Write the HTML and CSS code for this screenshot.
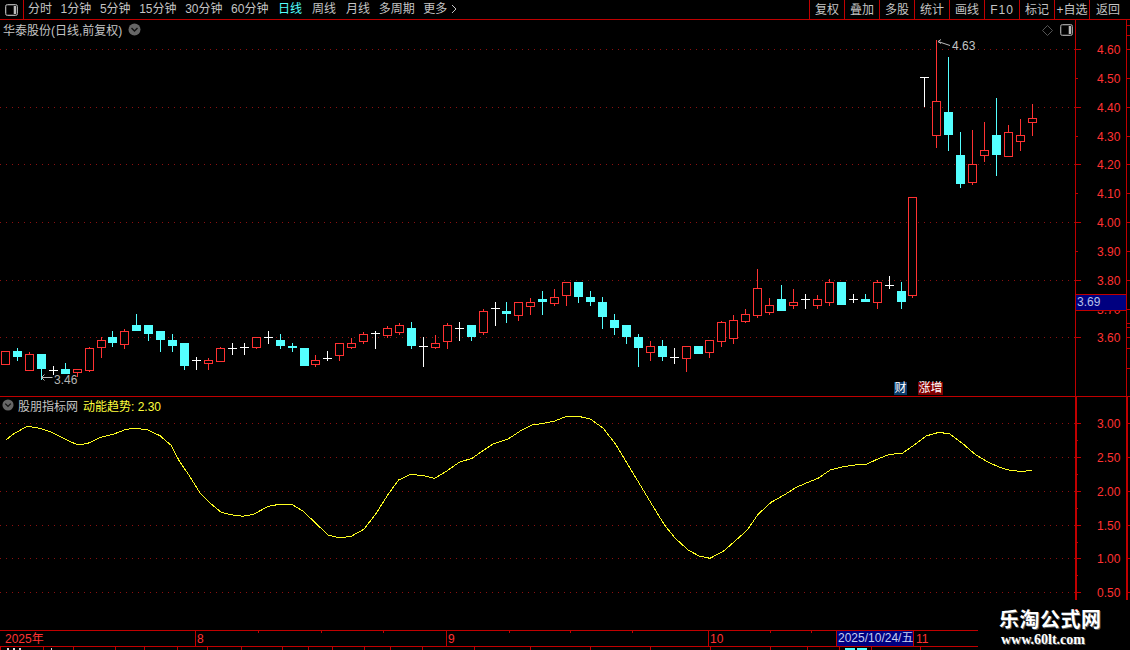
FILE: index.html
```html
<!DOCTYPE html>
<html lang="zh">
<head>
<meta charset="utf-8">
<title>华泰股份</title>
<link rel="stylesheet" href="styles.css">
</head>
<body>
<div class="app">
  <header class="toolbar">
    <div class="layout-btn">
      <svg width="14" height="12" viewBox="0 0 14 12"><rect x="0.5" y="0.5" width="12" height="11" rx="2" fill="#333" stroke="#aaa"/><rect x="2" y="2" width="6" height="8" fill="#000"/><rect x="9" y="2" width="2" height="8" fill="#bbb"/></svg>
    </div>
    <nav class="periods">
      <span>分时</span><span>1分钟</span><span>5分钟</span><span>15分钟</span><span>30分钟</span><span>60分钟</span>
      <span class="active">日线</span><span class="wk">周线</span><span class="wk">月线</span><span>多周期</span><span>更多 <svg class="chev" width="6" height="10" viewBox="0 0 6 10"><path d="M1 1l4 4-4 4" fill="none" stroke="#c4c4c4"/></svg></span>
    </nav>
    <div class="actions">
      <button>复权</button><button>叠加</button><button>多股</button><button>统计</button><button>画线</button><button class="f10">F10</button><button>标记</button><button class="plus">+自选</button><button class="last">返回</button>
    </div>
  </header>

  <section class="pane pane-main">
    <svg id="main" class="layer" width="1130" height="376" viewBox="0 20 1130 376"></svg>
    <div class="legend">
      <span class="stock">华泰股份(日线,前复权)</span>
      <svg class="circle" width="13" height="13" viewBox="0 0 13 13"><circle cx="6.5" cy="6.5" r="6" fill="#666"/><path d="M3.5 5l3 3 3-3" fill="none" stroke="#111" stroke-width="1.4"/></svg>
    </div>
    <div class="pane-icons">
      <svg width="11" height="11" viewBox="0 0 11 11"><path d="M5.5.5l5 5-5 5-5-5z" fill="none" stroke="#555"/></svg>
      <svg width="13" height="12" viewBox="0 0 13 12"><rect x="0.5" y="0.5" width="12" height="11" rx="2" fill="#333" stroke="#999"/><rect x="2" y="2" width="6" height="8" fill="#000"/><rect x="9" y="2" width="2" height="8" fill="#bbb"/></svg>
    </div>
    <div class="price-tag">3.69</div>
    <span class="badge cai">财</span>
    <span class="badge zeng">涨增</span>
  </section>

  <section class="pane pane-sub">
    <svg id="sub" class="layer" width="1130" height="233" viewBox="0 397 1130 233"></svg>
    <div class="legend legend-sub">
      <svg class="circle" width="12" height="12" viewBox="0 0 13 13"><circle cx="6.5" cy="6.5" r="6" fill="#666"/><path d="M3.5 5l3 3 3-3" fill="none" stroke="#111" stroke-width="1.4"/></svg>
      <span class="stock">股朋指标网</span>
      <span class="indicator">动能趋势: 2.30</span>
    </div>
  </section>

  <footer class="datebar">
    <svg id="dates" class="layer" width="978" height="15" viewBox="0 631 978 15"></svg>
    <div class="date-tag">2025/10/24/五</div>
  </footer>
  <svg id="below" width="1130" height="3" viewBox="0 647 1130 3"></svg>

  <div class="watermark">
    <div class="wm-cn">乐淘公式网</div>
    <div class="wm-en">www.60lt.com</div>
  </div>
</div>
<script src="chart.js"></script>
</body>
</html>
```

FILE: styles.css
```css
* { box-sizing: border-box; }
html, body { margin: 0; padding: 0; background: #000; }
body { width: 1130px; height: 650px; overflow: hidden; font: 12px "Liberation Sans", "Noto Sans CJK SC", sans-serif; color: #c4c4c4; }
.app { position: relative; width: 1130px; height: 650px; display: flex; flex-direction: column; background: #000; }

.toolbar { height: 20px; flex: none; display: flex; align-items: stretch; border-bottom: 1px solid #c00000; line-height: 18px; }
.layout-btn { width: 24px; border-right: 1px solid #c00000; display: flex; align-items: center; justify-content: center; }
.periods { display: flex; gap: 8.6px; margin-left: 4px; }
.periods span { white-space: nowrap; }
.periods .active { color: #54ffff; margin-left: 1px; }
.periods .wk { margin-left: 1.4px; }
.chev { vertical-align: -1px; }
.actions { margin-left: auto; display: flex; }
.actions button { width: 35px; padding: 0; background: none; border: 0; border-left: 1px solid #c00000; color: #c4c4c4; font: inherit; line-height: 18px; }
.actions .f10 { letter-spacing: 1px; }
.actions .plus { white-space: nowrap; }
.actions .last { width: 41px; padding-right: 4px; }

.pane { position: relative; flex: none; }
.pane-main { height: 377px; border-bottom: 1px solid #c00000; }
.pane-sub { height: 233px; }
.layer { position: absolute; left: 0; top: 0; display: block; }

.legend { position: relative; display: flex; align-items: center; height: 18px; padding-left: 3px; gap: 6px; }
.legend-sub { height: 16px; padding-left: 2px; gap: 4px; }
.indicator { color: #ffff3c; margin-left: 1px; }
.circle { flex: none; }
.pane-icons { position: absolute; top: 4px; right: 57px; display: flex; gap: 7px; align-items: center; }

.price-tag { position: absolute; left: 1075px; top: 274px; width: 52px; height: 17px; background: #000080; border: 1px solid #c00000; color: #b8c0e8; line-height: 15px; padding-left: 1px; }
.badge { position: absolute; top: 362px; height: 13px; line-height: 13px; color: #fff; text-align: center; }
.cai { left: 894px; width: 13px; background: #0a3a6a; }
.zeng { left: 918px; width: 25px; background: #800000; }

.datebar { position: relative; flex: none; width: 978px; height: 17px; border-top: 1px solid #c00000; border-bottom: 1px solid #c00000; }
.date-tag { position: absolute; left: 836px; top: -1px; width: 78px; height: 17px; background: #000080; border: 1px solid #c00000; color: #c4cff0; line-height: 15px; white-space: nowrap; overflow: hidden; padding-left: 1px; }
#below { display: block; flex: none; }

.watermark { position: absolute; left: 990px; top: 608px; width: 120px; color: #fff; font-weight: bold; text-shadow: 1px 1px 0 #555; }
.wm-cn { height: 22px; margin-bottom: 2px; padding-left: 9px; font: bold 20px/22px "Noto Sans CJK SC", sans-serif; letter-spacing: 0.5px; white-space: nowrap; }
.wm-en { height: 16px; padding-left: 11px; font: bold 14px/16px "Liberation Serif", serif; white-space: nowrap; }
```

FILE: chart.js
```js
var NS = 'http://www.w3.org/2000/svg';
var RED = '#ff3232', CY = '#54ffff', LINE = '#c00000', DOT = '#8c1010';

function add(svg, tag, attrs, text) {
  var el = document.createElementNS(NS, tag);
  for (var k in attrs) el.setAttribute(k, attrs[k]);
  if (text !== undefined) el.textContent = text;
  svg.appendChild(el);
  return el;
}
function hl(svg, x1, x2, y, color, extra) {
  var a = { x1: x1, x2: x2, y1: y + 0.5, y2: y + 0.5, stroke: color, 'shape-rendering': 'crispEdges' };
  for (var k in extra) a[k] = extra[k];
  add(svg, 'line', a);
}
function vl(svg, x, y1, y2, color, w) {
  add(svg, 'rect', { x: x, y: y1, width: w || 1, height: y2 - y1, fill: color, 'shape-rendering': 'crispEdges' });
}
function label(svg, x, y, s, color) {
  add(svg, 'text', { x: x, y: y, fill: color, 'font-size': 12, 'font-family': '"Liberation Sans","Noto Sans CJK SC",sans-serif' }, s);
}

/* type, body top, body bottom, high, low (pixel rows of the chart) */
var K = [
['r',351,364,351,364],['c',351,357,348,360],['r',354,370,352,370],['c',354,369,354,379],['w',370,370,366,374],
['c',369,374,363,374],['r',369,372,369,376],['r',348,370,347,371],['r',340,347,337,357],['c',337,343,331,346],
['r',331,344,329,348],['c',325,331,314,331],['c',325,334,325,340],['c',331,340,331,351],['c',340,346,334,351],
['c',343,366,343,369],['w',360,360,357,369],['r',360,363,358,369],['r',348,361,347,361],['w',348,348,343,354],
['w',347,347,343,354],['r',337,347,337,348],['w',337,337,331,343],['c',340,346,334,348],['c',346,348,343,351],
['c',348,366,348,366],['r',360,364,355,366],['w',358,358,351,360],['r',343,355,343,360],['r',343,347,338,348],
['r',334,341,332,343],['w',333,333,331,348],['r',328,335,326,337],['r',325,332,323,334],['c',328,346,322,348],
['w',346,346,337,366],['r',343,347,335,348],['r',325,341,323,348],['w',328,328,322,340],['c',325,337,325,340],
['r',311,332,309,334],['w',308,308,302,325],['c',311,314,302,322],['r',302,315,302,320],['r',302,306,298,314],
['c',299,302,291,314],['r',297,303,289,305],['r',282,295,282,305],['c',282,297,282,302],['c',297,302,291,305],
['c',302,317,297,328],['c',320,328,314,334],['c',325,337,325,343],['c',337,348,334,366],['r',346,352,341,360],
['c',346,357,340,360],['w',357,357,348,363],['r',346,358,346,371],['c',346,354,346,354],['r',340,352,340,357],
['r',322,341,321,346],['r',320,338,315,343],['r',314,321,309,322],['r',288,315,269,317],['r',305,312,298,314],
['c',299,311,285,311],['r',302,305,289,308],['w',299,299,294,308],['r',299,305,295,308],['r',282,302,279,305],
['c',282,305,282,305],['w',299,299,294,302],['c',299,302,294,302],['r',282,302,280,308],['w',285,285,276,288],
['c',291,302,282,308],['r',197,295,197,297],['t',77,77,77,106],['r',101,135,40,147],['c',112,135,57,150],
['c',155,184,132,187],['r',164,182,130,184],['r',150,155,122,161],['c',135,155,98,175],['r',132,156,125,156],
['r',135,141,119,150],['r',118,122,104,135]
];

var main = document.getElementById('main');
[49,107,164,222,280,337].forEach(function (y) {
  hl(main, 0, 1075, y, DOT, { 'stroke-dasharray': '1 5' });
});
K.forEach(function (d, i) {
  var cx = Math.floor(5.3 + 11.94 * i + 0.2), t = d[1], b = d[2], hi = d[3], lo = d[4];
  if (d[0] === 'w' || d[0] === 't') {
    vl(main, cx, hi, lo + 1, '#fff');
    vl(main, cx - 4, t, t + 1, '#fff', 9);
    return;
  }
  var col = d[0] === 'r' ? RED : CY;
  if (hi < t) vl(main, cx, hi, t, col);
  if (lo > b) vl(main, cx, b, lo + 1, col);
  if (d[0] === 'c') {
    add(main, 'rect', { x: cx - 4, y: t, width: 9, height: b - t, fill: CY, 'shape-rendering': 'crispEdges' });
  } else {
    add(main, 'rect', { x: cx - 3.5, y: t + 0.5, width: 8, height: b - t, fill: '#000', stroke: RED, 'shape-rendering': 'crispEdges' });
  }
});

/* extremes */
add(main, 'path', { d: 'M41.5 377.5h11M41.5 377.5l3-3M41.5 377.5l3 3', stroke: '#bbb', fill: 'none' });
label(main, 54, 384, '3.46', '#b4b4b4');
add(main, 'path', { d: 'M938 41.5l12 4M938 41.5l3-2M938 41.5l3 2', stroke: '#bbb', fill: 'none' });
label(main, 952, 50, '4.63', '#c4c4c4');

/* main axis */
vl(main, 1075, 20, 396, LINE);
vl(main, 1126, 20, 396, LINE);
var py = [49,78,107,136,164,193,222,251,280,309,337];
var pl = ['4.60','4.50','4.40','4.30','4.20','4.10','4.00','3.90','3.80','3.70','3.60'];
py.forEach(function (y, i) {
  hl(main, 1075, i % 2 ? 1078 : 1081, y, LINE);
  label(main, 1097, y + 5, pl[i], RED);
  hl(main, 1127, 1130, y, LINE);
});
[25,35,323,327,348,368].forEach(function (y) { hl(main, 1127, 1130, y, LINE); });

/* sub pane */
var sub = document.getElementById('sub');
var sy = [423,457,491,525,558,592], sl = ['3.00','2.50','2.00','1.50','1.00','0.50'];
sy.forEach(function (y, i) {
  hl(sub, 0, 1075, y, DOT, { 'stroke-dasharray': '1 5' });
  hl(sub, 1075, 1081, y, LINE);
  hl(sub, 1075, 1078, y + 17, LINE);
  hl(sub, 1127, 1130, y, LINE);
  label(sub, 1097, y + 5, sl[i], RED);
});
vl(sub, 1075, 397, 600, LINE, 2);
vl(sub, 1126, 397, 600, LINE, 2);
var C = [8,105,20,85,38,64,55,70,72,82,90,102,108,120,122,115,140,97,158,87,175,73,190,70,205,75,222,92,238,122,248,165,262,210,278,265,293,297,307,322,320,329,337,334,352,328,372,304,388,298,405,298,420,318,437,352,455,390,472,399,488,393,505,373,522,325,538,270,553,225,570,208,588,212,603,220,620,198,637,172,655,160,670,137,685,116,705,102,722,78,738,60,755,55,770,48,785,35,803,34,820,43,837,70,855,120,870,175,887,235,905,300,922,360,937,400,955,435,970,453,985,460,1003,440,1020,408,1037,375,1052,328,1070,292,1088,270,1105,247,1120,233,1135,220,1152,195,1170,185,1187,180,1203,177,1220,160,1235,148,1252,145,1270,118,1285,93,1303,82,1318,87,1337,118,1353,148,1370,170,1387,187,1403,197,1420,199,1432,196];
var pts = [];
for (var n = 0; n < C.length; n += 2) {
  pts.push((C[n] / 1.3876).toFixed(1) + ',' + (405 + C[n + 1] / 3).toFixed(1));
}
add(sub, 'polyline', { points: pts.join(' '), fill: 'none', stroke: '#ffff20', 'stroke-width': 1, 'shape-rendering': 'crispEdges' });

/* date axis */
var dates = document.getElementById('dates');
[[195,'8',197],[446,'9',448],[708,'10',710]].forEach(function (d) {
  vl(dates, d[0], 631, 646, LINE);
  label(dates, d[2], 643, d[1], RED);
});
label(dates, 5, 643, '2025年', RED);
label(dates, 916, 643, '11', RED);
[258,321,383,509,570,632,770,811,871].forEach(function (x) { vl(dates, x, 631, 633, LINE); });

/* row under the date axis */
var below = document.getElementById('below');
[0,43,73,115,144,177,207,241,282,308,332,364,390,422,474,530,590,650,710,770,807,839,871,920].forEach(function (x) {
  vl(below, x, 647, 650, LINE);
});
[[7,2],[13,2],[19,2],[51,1]].forEach(function (d) { vl(below, d[0], 648, 650, '#ddd', d[1]); });
vl(below, 845, 648, 650, '#54ffff', 10);
vl(below, 857, 648, 650, '#54ffff', 10);
```
